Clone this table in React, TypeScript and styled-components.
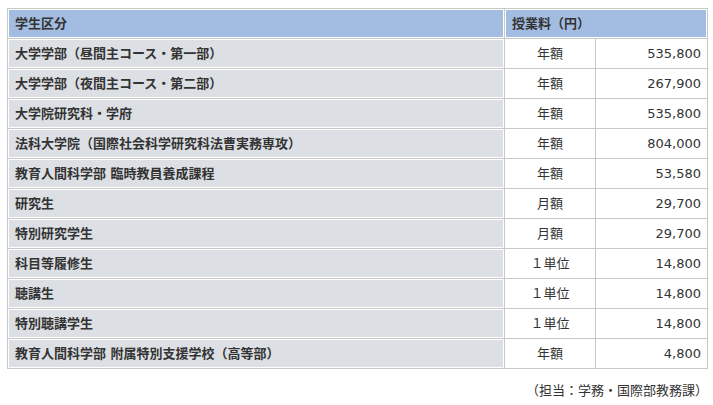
import React from "react";
import styled, { createGlobalStyle } from "styled-components";

const GlobalStyle = createGlobalStyle`
  html, body { margin: 0; padding: 0; background: #ffffff; }
  body {
    font-family: "DejaVu Sans", "Noto Sans CJK JP", sans-serif;
    font-size: 13px;
    color: #333333;
  }
`;

const Page = styled.div`
  padding: 8px 0 0 7px;
  width: 701px;
`;

const FeeTable = styled.div`
  display: grid;
  grid-template-columns: 496px 90px 111px;
  gap: 1px;
  padding: 1px;
  background: #c8c8c8;
  box-sizing: border-box;
  width: 701px;
`;

const Cell = styled.div`
  box-sizing: border-box;
  line-height: 17px;
  height: 29px;
  padding: 6px 6px 6px 7px;
  white-space: nowrap;
  background: #ffffff;
`;

const HeadCell = styled(Cell)<{ $span?: number }>`
  background: #a3bce2;
  box-shadow: inset 0 0 0 1px #ffffff;
  font-weight: bold;
  grid-column: span ${(p) => p.$span ?? 1};
`;

const LabelCell = styled(Cell)`
  background: #dcdfe3;
  box-shadow: inset 0 0 0 1px #ffffff;
  font-weight: bold;
`;

const UnitCell = styled(Cell)`
  text-align: center;
  padding-left: 6px;
`;

const AmountCell = styled(Cell)`
  text-align: right;
`;

const Note = styled.p`
  margin: 13px 0 0;
  text-align: right;
  line-height: 17px;
`;

const rows: [string, string, string][] = [
  ["大学学部（昼間主コース・第一部）", "年額", "535,800"],
  ["大学学部（夜間主コース・第二部）", "年額", "267,900"],
  ["大学院研究科・学府", "年額", "535,800"],
  ["法科大学院（国際社会科学研究科法曹実務専攻）", "年額", "804,000"],
  ["教育人間科学部 臨時教員養成課程", "年額", "53,580"],
  ["研究生", "月額", "29,700"],
  ["特別研究学生", "月額", "29,700"],
  ["科目等履修生", "１単位", "14,800"],
  ["聴講生", "１単位", "14,800"],
  ["特別聴講学生", "１単位", "14,800"],
  ["教育人間科学部 附属特別支援学校（高等部）", "年額", "4,800"],
];

export default function App() {
  return (
    <>
      <GlobalStyle />
      <Page>
        <FeeTable>
          <HeadCell>学生区分</HeadCell>
          <HeadCell $span={2}>授業料（円）</HeadCell>
          {rows.map(([label, unit, amount]) => (
            <React.Fragment key={label}>
              <LabelCell>{label}</LabelCell>
              <UnitCell>{unit}</UnitCell>
              <AmountCell>{amount}</AmountCell>
            </React.Fragment>
          ))}
        </FeeTable>
        <Note>（担当：学務・国際部教務課）</Note>
      </Page>
    </>
  );
}
